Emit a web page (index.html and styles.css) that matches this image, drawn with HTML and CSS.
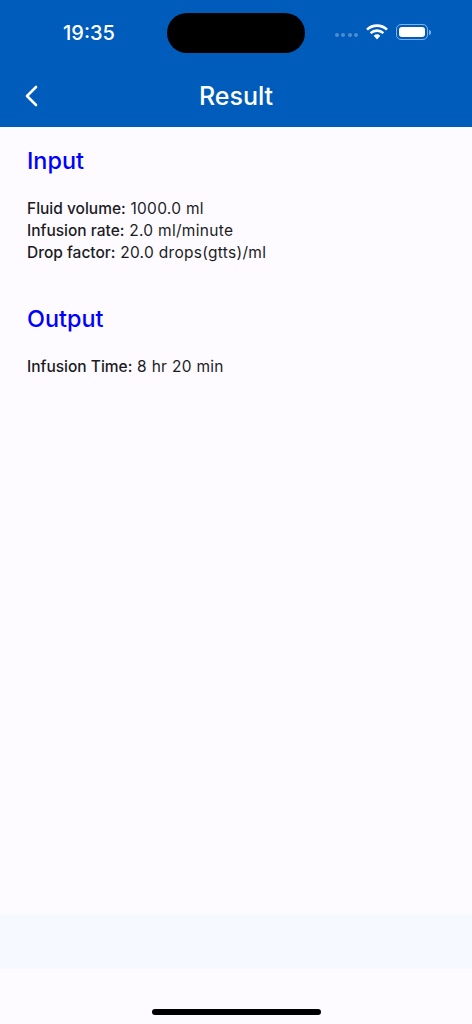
FILE: index.html
```html
<!DOCTYPE html>
<html lang="en">
<head>
  <meta charset="UTF-8" />
  <meta name="viewport" content="width=device-width, initial-scale=1.0"/>
  <title>Result</title>
  <link rel="stylesheet" href="styles.css">
</head>
<body>

  <!-- Header Section -->
  <header>
    <div class="status-bar">
      <span class="time">19:35</span>
      <div class="island"></div>
      <div class="status-icons">
        <div class="signal">
          <span></span><span></span><span></span><span></span>
        </div>
        <svg class="wifi" width="22" height="16" viewBox="0 0 22 16">
          <path d="M1 5.6 A14.5 14.5 0 0 1 21 5.6" fill="none" stroke="#fff" stroke-width="2.6"/>
          <path d="M4.6 9.1 A9.4 9.4 0 0 1 17.4 9.1" fill="none" stroke="#fff" stroke-width="2.6"/>
          <path d="M7.7 11.7 A5 5 0 0 1 14.3 11.7 L11 15.4 Z" fill="#fff"/>
        </svg>
        <div class="battery">
          <div class="battery-level"></div>
        </div>
        <div class="battery-cap"></div>
      </div>
    </div>
    <div class="nav-bar">
      <svg class="back" width="14" height="22" viewBox="0 0 14 22">
        <path d="M12 2 L3 11 L12 20" fill="none" stroke="#fff" stroke-width="2.6" stroke-linecap="round" stroke-linejoin="round"/>
      </svg>
      <h1>Result</h1>
    </div>
  </header>

  <!-- Main Content -->
  <main>
    <section class="input-section">
      <h2>Input</h2>
      <p><b>Fluid volume:</b> 1000.0 ml</p>
      <p><b>Infusion rate:</b> 2.0 ml/minute</p>
      <p><b>Drop factor:</b> 20.0 drops(gtts)/ml</p>
    </section>
    <section class="output-section">
      <h2>Output</h2>
      <p><b>Infusion Time:</b> 8 hr 20 min</p>
    </section>
  </main>

  <!-- Footer Section -->
  <div class="ad-strip"></div>
  <footer>
    <div class="home-bar"></div>
  </footer>

</body>
</html>
```

FILE: styles.css
```css
html, body {
  height: 100%;
}

body {
  margin: 0;
  font-family: Inter, 'Noto Sans', sans-serif;
  background: #fdfbff;
  display: flex;
  flex-direction: column;
  min-height: 100vh;
  color: #1c1b1f;
}

/* Header Styling */
header {
  background-color: #005cbb;
  color: white;
  height: 127px;
  box-sizing: border-box;
}

.status-bar {
  position: relative;
  height: 64px;
  display: flex;
  justify-content: space-between;
  align-items: center;
  padding: 0 41px 0 63px;
}

.time {
  font-size: 20px;
  font-weight: 500;
  padding-top: 1px;
}

.island {
  position: absolute;
  left: 167px;
  top: 13px;
  width: 138px;
  height: 40px;
  background: #000;
  border-radius: 20px;
}

.status-icons {
  display: flex;
  align-items: center;
}

.signal {
  display: flex;
  gap: 2.5px;
  margin-right: 8px;
  margin-top: 5px;
}

.signal span {
  width: 4px;
  height: 4px;
  border-radius: 50%;
  background: rgba(255, 255, 255, 0.3);
}

.wifi {
  margin-right: 8px;
}

.battery {
  width: 32px;
  height: 16px;
  box-sizing: border-box;
  border: 1px solid rgba(255, 255, 255, 0.5);
  border-radius: 5px;
  padding: 2px;
}

.battery-level {
  height: 100%;
  background: #fff;
  border-radius: 3px;
}

.battery-cap {
  width: 2px;
  height: 5px;
  margin-left: 1px;
  background: rgba(255, 255, 255, 0.5);
  border-radius: 0 2px 2px 0;
}

.nav-bar {
  position: relative;
  height: 63px;
  display: flex;
  justify-content: center;
  align-items: center;
}

.nav-bar h1 {
  margin: 0;
  font-size: 25px;
  font-weight: 500;
}

.back {
  position: absolute;
  left: 24px;
  top: 21px;
}

/* Main content styling */
main {
  flex: 1;
  padding: 19px 27px 0;
}

h2 {
  margin: 0 0 22px;
  font-size: 23.4px;
  line-height: 30px;
  font-weight: 500;
  color: #0000ff;
}

p {
  margin: 0;
  font-size: 15.5px;
  line-height: 22px;
  letter-spacing: 0.3px;
}

b {
  font-weight: 500;
  letter-spacing: 0;
}

.input-section {
  margin-bottom: 40px;
}

/* Footer Styling */
.ad-strip {
  height: 55px;
  background: #f6f9ff;
}

footer {
  height: 55px;
  display: flex;
  justify-content: center;
}

.home-bar {
  width: 169px;
  height: 6px;
  margin-top: 40px;
  background: #000;
  border-radius: 3px;
}
```
